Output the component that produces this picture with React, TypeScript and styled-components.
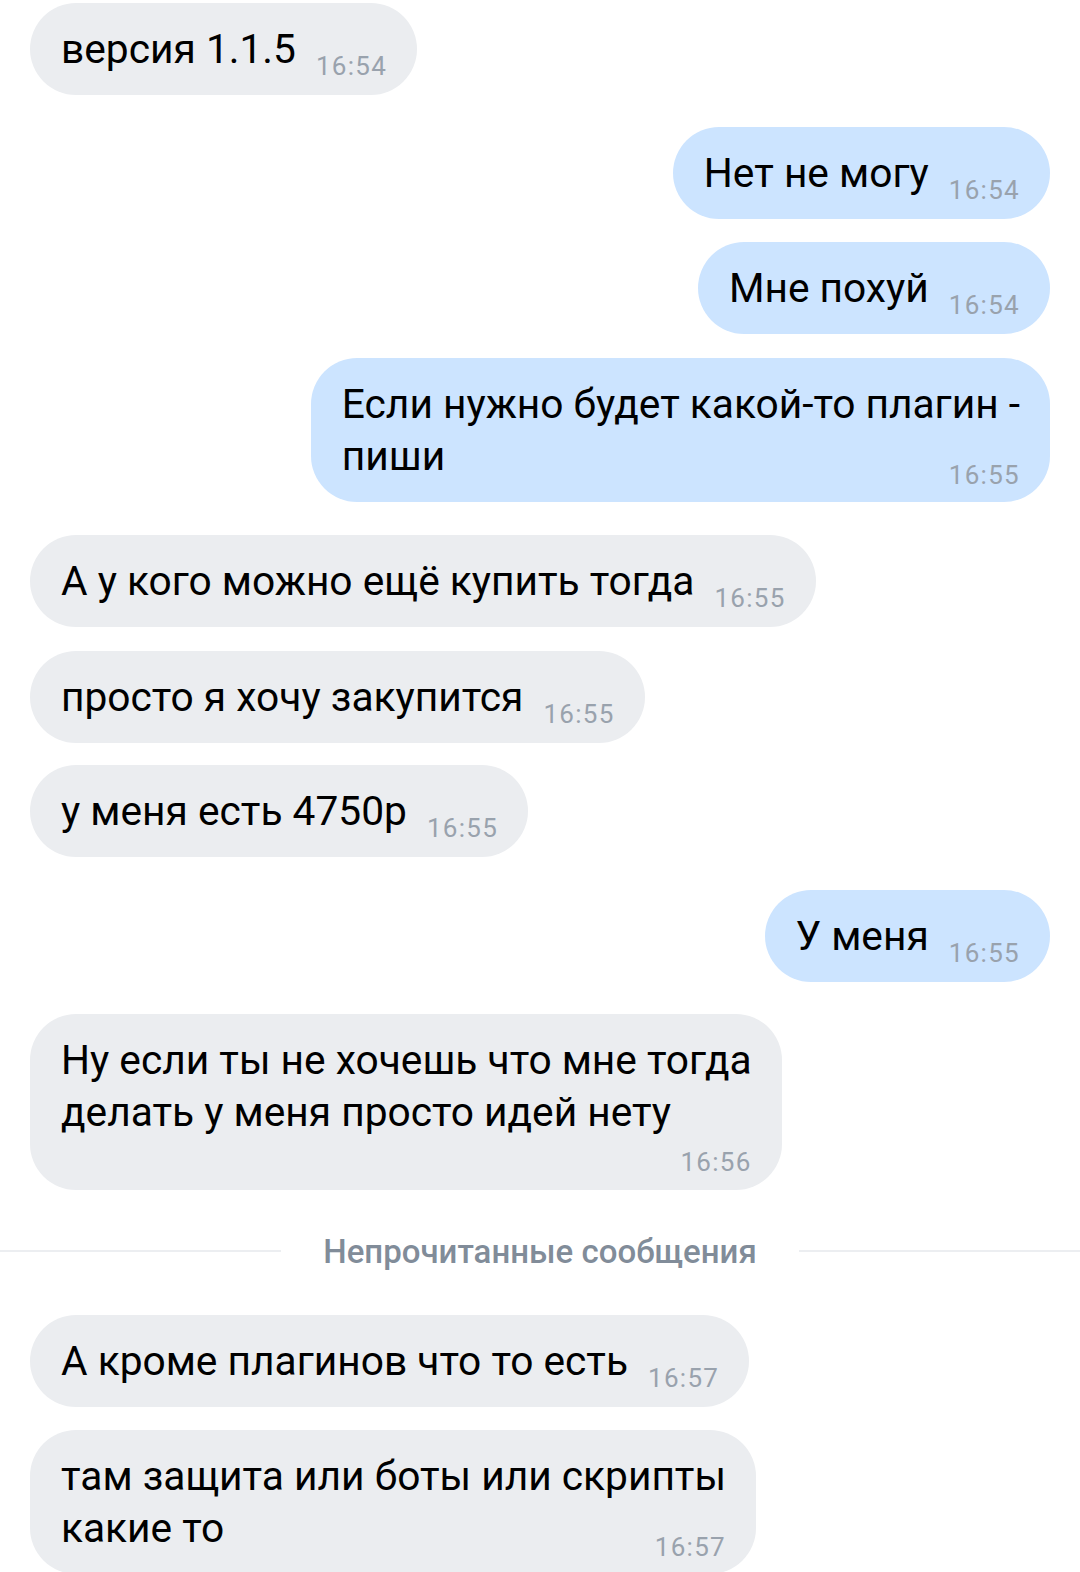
import React from 'react'
import styled, { createGlobalStyle } from 'styled-components'

type TimeMode = 'inline' | 'float' | 'block';

interface Msg {
    out?: boolean;
    gap: number;
    lines: string[];
    time: string;
    mode?: TimeMode;
}

const messages: Msg[] = [
    { gap: 3, lines: ['версия 1.1.5'], time: '16:54' },
    { out: true, gap: 32, lines: ['Нет не могу'], time: '16:54' },
    { out: true, gap: 23, lines: ['Мне похуй'], time: '16:54' },
    { out: true, gap: 24, lines: ['Если нужно будет какой-то плагин -', 'пиши'], time: '16:55', mode: 'float' },
    { gap: 33, lines: ['А у кого можно ещё купить тогда'], time: '16:55' },
    { gap: 24, lines: ['просто я хочу закупится'], time: '16:55' },
    { gap: 22, lines: ['у меня есть 4750р'], time: '16:55' },
    { out: true, gap: 33, lines: ['У меня'], time: '16:55' },
    { gap: 32, lines: ['Ну если ты не хочешь что мне тогда', 'делать у меня просто идей нету'], time: '16:56', mode: 'block' },
]

const unread: Msg[] = [
    { gap: 0, lines: ['А кроме плагинов что то есть'], time: '16:57' },
    { gap: 23, lines: ['там защита или боты или скрипты', 'какие то'], time: '16:57', mode: 'float' },
]

function Message({ out, gap, lines, time, mode = 'inline' }: Msg) {
    return (
    <Row $out={out} $gap={gap}>
        <Bubble $out={out}>
        <Text>
            {lines.map((l, i) => (
            <React.Fragment key={i}>
                {i > 0 && <br />}
                {l}
            </React.Fragment>
            ))}
        </Text>
        <Time $mode={mode}>{time}</Time>
        </Bubble>
    </Row>
  )
}

export default function App() {
    return (
    <>
        <GlobalStyle />
        <Chat>
        {messages.map((m, i) => <Message key={i} {...m} />)}
        <Divider>
            <Line />
            <DividerLabel>Непрочитанные сообщения</DividerLabel>
            <Line />
        </Divider>
        {unread.map((m, i) => <Message key={i} {...m} />)}
        </Chat>
    </>
  )
}

const GlobalStyle = createGlobalStyle`
  html, body {
    margin: 0;
    padding: 0;
    background: #ffffff;
    overflow: hidden;
  }
  body {
    font-family: Roboto, "Noto Sans", sans-serif;
  }
`;

const Chat = styled.div`
    display: flex;
    flex-direction: column;
    width: 1080px;
    padding: 0 30px 0 30px;
    box-sizing: border-box;
`;

const Row = styled.div<{ $out?: boolean; $gap: number }>`
    display: flex;
    justify-content: ${p => (p.$out ? 'flex-end' : 'flex-start')};
    margin-top: ${p => p.$gap}px;
`;

const Bubble = styled.div<{ $out?: boolean }>`
    padding: 20px 30px 20px 31px;
    border-radius: 46px;
    background: ${p => (p.$out ? '#cce4ff' : '#ebedf0')};
    white-space: nowrap;
`;

const Text = styled.span`
    font-size: 40.7px;
    line-height: 52px;
    color: #000000;
`;

const timeLayout = {
    inline: 'display: inline-block; margin-left: 20px; vertical-align: -12px;',
    float: 'float: right; margin: 37px 0 -2px 20px;',
    block: 'display: block; text-align: right; margin: 16px 0 0 0;',
};

const Time = styled.span<{ $mode: TimeMode }>`
    ${p => timeLayout[p.$mode]}
    font-size: 26px;
    line-height: 16px;
    letter-spacing: 1.3px;
    color: #99a2ad;
`;

const Divider = styled.div`
    display: flex;
    align-items: center;
    gap: 42px;
    margin: 41px -30px 44px -30px;
    height: 40px;
`;

const Line = styled.div`
    flex: 1;
    height: 2px;
    background: #eceef1;
`;

const DividerLabel = styled.span`
    font-size: 33px;
    font-weight: 500;
    color: #818c99;
    white-space: nowrap;
`;
